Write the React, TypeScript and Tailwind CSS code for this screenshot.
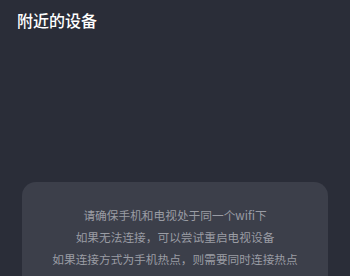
export default function App() {
  const tips = [
    "请确保手机和电视处于同一个wifi下",
    "如果无法连接，可以尝试重启电视设备",
    "如果连接方式为手机热点，则需要同时连接热点",
  ];

  return (
    <div
      className="h-[276px] w-[350px] overflow-hidden bg-[#2a2d38] flex flex-col"
      style={{ fontFamily: '"Noto Sans CJK SC", "Noto Sans", sans-serif' }}
    >
      <h1 className="pl-[17px] pt-[7px] text-[16px] leading-[26px] font-medium text-white">
        附近的设备
      </h1>
      <div className="mx-[22px] mt-[149px] h-[140px] shrink-0 rounded-[14px] bg-[#3c3f4a] pt-[22px]">
        {tips.map((t, i) => (
          <p key={i} className="text-center text-[11.7px] leading-[22px] text-[#9a9ca4]">
            {t}
          </p>
        ))}
      </div>
    </div>
  );
}
